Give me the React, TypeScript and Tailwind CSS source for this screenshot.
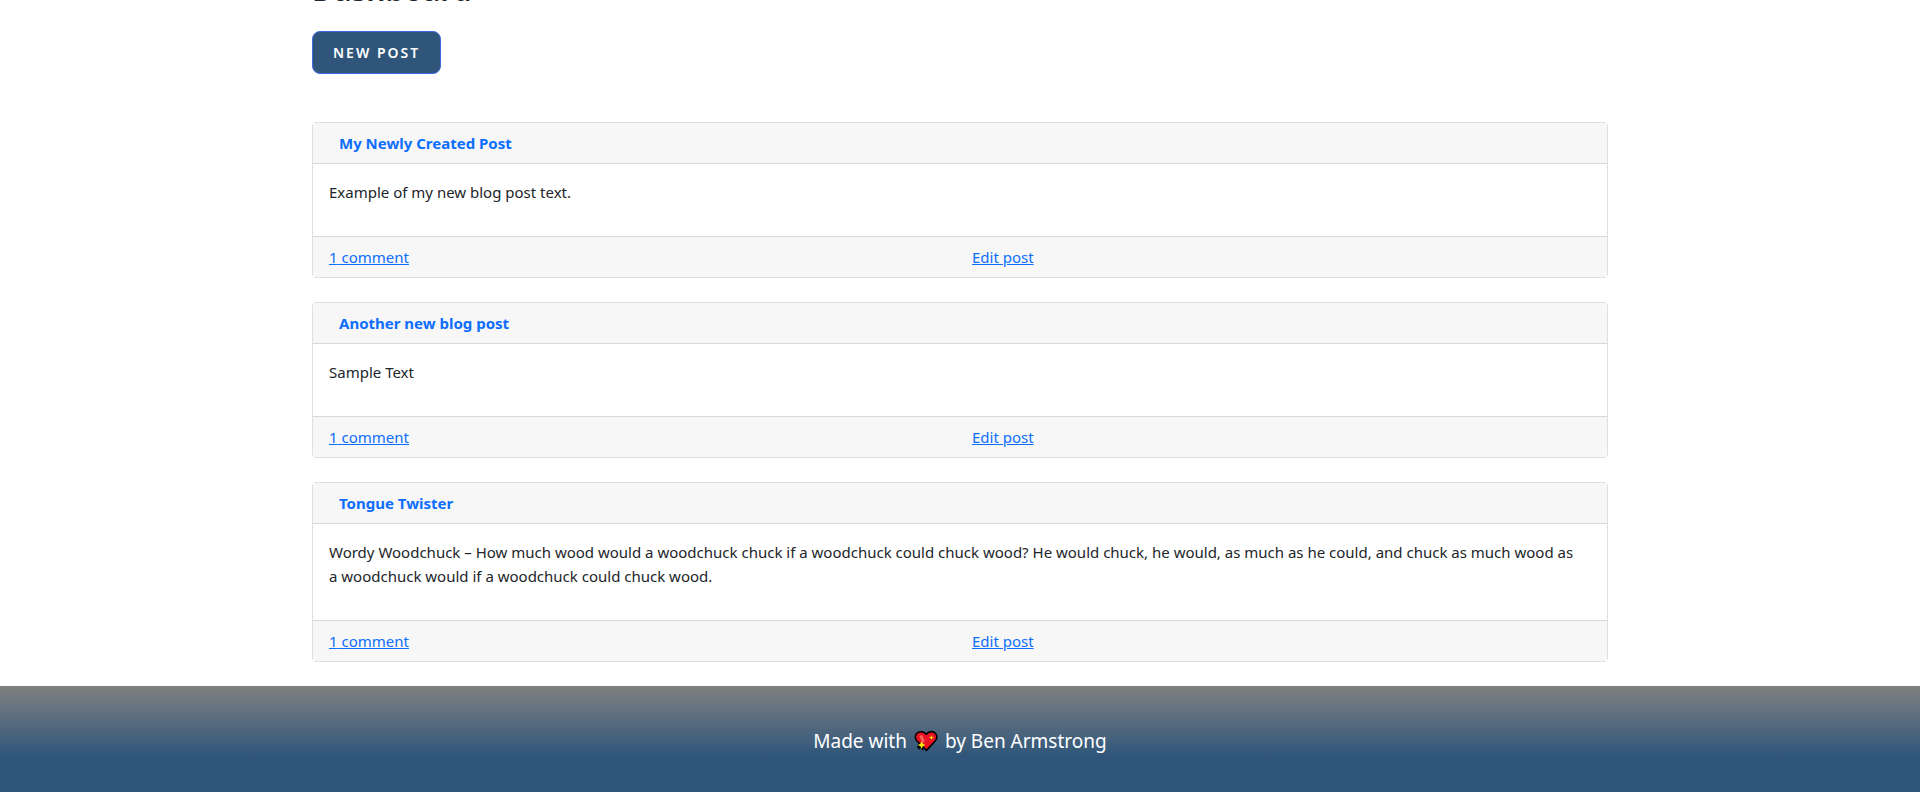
const posts = [
  { title: "My Newly Created Post", body: "Example of my new blog post text.", comments: 1 },
  { title: "Another new blog post", body: "Sample Text", comments: 1 },
  {
    title: "Tongue Twister",
    body: "Wordy Woodchuck – How much wood would a woodchuck chuck if a woodchuck could chuck wood? He would chuck, he would, as much as he could, and chuck as much wood as a\u00a0woodchuck would if a woodchuck could chuck wood.",
    comments: 1,
  },
];

function SparklingHeart() {
  return (
    <svg viewBox="0 0 24 22" className="h-[22px] w-6" role="img" aria-label="love">
      <path
        d="M12.5 20.4 L3 11 C0.6 8.4 0.8 4.4 3.6 2.6 C6.6 0.8 10.4 1.8 12.3 4.4 C14 1.8 17.8 0.8 20.6 2.6 C23.4 4.4 23.6 8.4 21.2 11 Z"
        fill="#e81224"
        stroke="#000"
        strokeWidth="1.6"
        strokeLinejoin="round"
      />
      <path d="M5.4 6 C6.6 4.6 8.6 5 9.2 6.4 C8.8 8.4 10.8 8.6 10.6 11 L8.6 13.4 C8.4 10.6 5.6 9 5.4 6 Z" fill="#f4625c" />
      <path d="M3.2 17.4 L5 20 L6.2 18 L9.2 21 L9.2 17.6 L10 16 L7 13 L4 14 Z" fill="#000" />
      <path d="M7.6 11.2 L8.8 13.8 L11.4 15 L8.8 16.2 L7.6 18.8 L6.4 16.2 L3.8 15 L6.4 13.8 Z" fill="#fff100" />
      <path d="M17.4 5 L18 7 L20 7.6 L18 8.2 L17.4 10.2 L16.8 8.2 L14.8 7.6 L16.8 7 Z" fill="#fff100" />
    </svg>
  );
}

export default function App() {
  return (
    <div className="flex flex-col overflow-hidden bg-white font-['Noto_Sans','Open_Sans',sans-serif] text-[15px] leading-6 text-[#212529]">
      <main className="mx-auto w-full max-w-[1320px] px-3">
        <h1 className="-mt-[30px] text-[30px] leading-10 font-semibold">Dashboard</h1>
        <button
          type="button"
          className="mt-[21px] h-[43px] rounded-lg border border-[#4169e1] bg-[#2f567a] px-5 text-[14px] font-semibold tracking-[2px] text-white uppercase"
        >
          New Post
        </button>
        <div className="mt-12 mb-6 flex flex-col gap-6">
          {posts.map((post) => (
            <article key={post.title} className="rounded border border-[#dfdfdf] bg-white">
              <header className="border-b border-[#d8d8d8] bg-[#f7f7f7] px-[26px] py-2">
                <h2 className="font-bold text-[#0d6efd]">{post.title}</h2>
              </header>
              <p className="px-4 pt-4 pb-8">{post.body}</p>
              <footer className="grid grid-cols-2 border-t border-[#d8d8d8] bg-[#f7f7f7] px-4 py-2 text-[#0d6efd] underline">
                <div>
                  <a href="#comments">{post.comments} comment</a>
                </div>
                <div className="pl-3">
                  <a href="#edit">Edit post</a>
                </div>
              </footer>
            </article>
          ))}
        </div>
      </main>
      <footer className="flex h-[106px] items-center justify-center gap-[7px] bg-linear-to-b from-[#808080] to-[#2f567a] to-66% pt-1 text-[19px] text-white">
        <span>Made with</span>
        <SparklingHeart />
        <span>by Ben Armstrong</span>
      </footer>
    </div>
  );
}
